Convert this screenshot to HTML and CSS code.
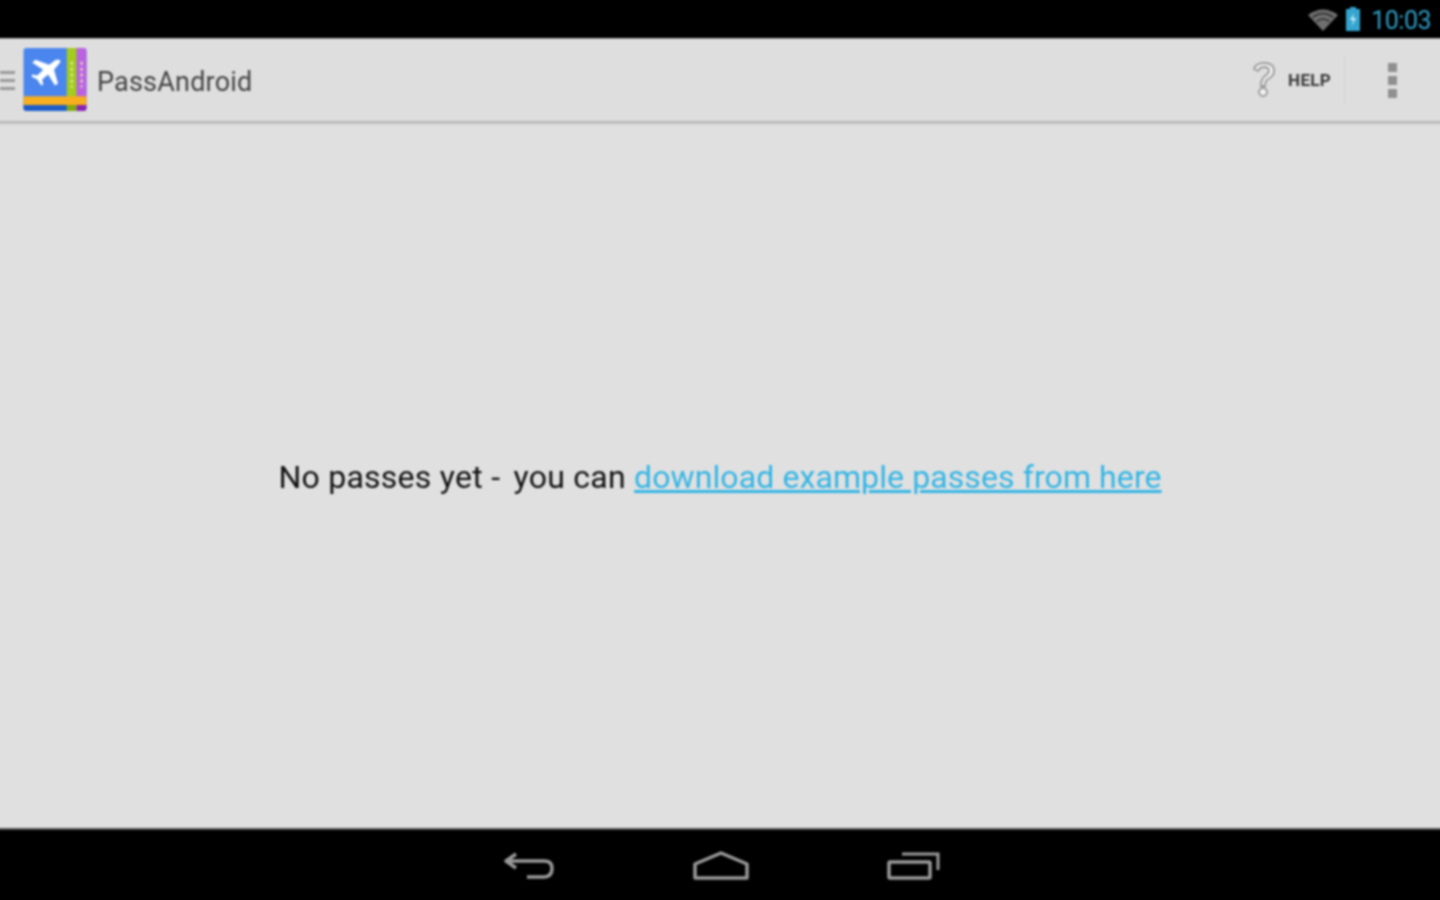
FILE: index.html
```html
<!DOCTYPE html>
<html lang="en">
<head>
  <meta charset="UTF-8">
  <title>PassAndroid</title>
  <link rel="stylesheet" href="styles.css">
</head>
<body>
  <div class="status-bar">
    <svg class="wifi" width="32" height="24" viewBox="0 0 32 24">
      <path d="M1 8 Q16 -3 31 8 L16 24 Z" fill="#6f6f6f"/>
      <path d="M5.500 10.500 Q16 2.500 26.500 10.500 M9.500 14.500 Q16 9.500 22.500 14.500" fill="none" stroke="#2b2b2b" stroke-width="1.500"/>
    </svg>
    <svg class="battery" width="16" height="24" viewBox="0 0 16 24">
      <path d="M5 0 H11 V2 H15 V24 H1 V2 H5 Z" fill="#35a5cf"/>
      <path d="M9 6 L5 13 H8 L7 19 L11 11 H8 Z" fill="#c8ecf8"/>
    </svg>
    <span class="clock">10:03</span>
  </div>

  <header class="action-bar">
    <div class="up-icon"><span></span><span></span><span></span></div>
    <svg class="logo" width="64" height="63" viewBox="0 0 64 64">
      <rect width="64" height="64" rx="3" fill="#4a86ee"/>
      <rect x="44" width="10" height="64" fill="#a4cc1c"/>
      <path d="M54 0 H61 Q64 0 64 3 V50 H54 Z" fill="#bb62e0"/>
      <rect y="49" width="64" height="9" fill="#f7ae1f"/>
      <path d="M0 58 H44 V64 H3 Q0 64 0 61 Z" fill="#1c5cc8"/>
      <rect x="44" y="58" width="10" height="6" fill="#82aa0c"/>
      <path d="M54 58 H64 V61 Q64 64 61 64 H54 Z" fill="#8a22b4"/>
      <path d="M36 12 Q38 12 37 15 L31 22 L35 36 L32 38 L25 27 L19 32 L20 37 L18 38 L14 32 L8 29 L9 27 L14 28 L20 22 L9 15 L12 12 L26 17 L33 12 Z" fill="#fff"/>
      <path d="M49 14 V40 M59 14 V40" stroke="#e6eeb8" stroke-width="2" stroke-dasharray="3 3"/>
    </svg>
    <h1 class="title">PassAndroid</h1>
    <div class="actions">
      <div class="help">
        <svg width="26" height="38" viewBox="0 0 26 38">
          <path d="M3 8 Q5 2 13 2 Q23 2 23 10 Q23 15 17 18 Q14 20 14 25 H10 Q10 18 14 15 Q18 12 18 10 Q18 6 13 6 Q9 6 7 10 Z" fill="#f2f2f2" stroke="#9a9a9a" stroke-width="1.800" stroke-linejoin="round"/>
          <circle cx="12" cy="31" r="4" fill="#f2f2f2" stroke="#9a9a9a" stroke-width="1.800"/>
        </svg>
        <span class="help-label">HELP</span>
      </div>
      <div class="overflow"><span></span><span></span><span></span></div>
    </div>
  </header>

  <main class="content">
    <p class="empty">No passes yet <span class="dash">-</span> you can <a href="#">download example passes from here</a></p>
  </main>

  <nav class="nav-bar">
    <svg width="52" height="30" viewBox="0 0 52 30">
      <path d="M13 3 L3 10 L13 17 M3 10 H41 Q49 10 49 17 Q49 26 41 26 H24" fill="none" stroke="#999" stroke-width="3.500" stroke-linejoin="round"/>
    </svg>
    <svg width="56" height="30" viewBox="0 0 56 30">
      <path d="M2 13 L28 2 L54 13 V27 H2 Z" fill="none" stroke="#999" stroke-width="3.500" stroke-linejoin="round"/>
    </svg>
    <svg width="54" height="30" viewBox="0 0 54 30">
      <rect x="2" y="11" width="41" height="16" rx="1" fill="none" stroke="#999" stroke-width="3.500"/>
      <path d="M15 3 H51 V19" fill="none" stroke="#999" stroke-width="3"/>
    </svg>
  </nav>
</body>
</html>
```

FILE: styles.css
```css
html {
  height: 100%;
  overflow: hidden;
  background-color: #e0e0e0;
}
/* body runs 4px past the window so the blur doesn't fade at the edges */
body {
  margin: -4px;
  display: flex;
  flex-direction: column;
  height: 908px;
  font-family: Roboto, "Liberation Sans", sans-serif;
  background-color: #e0e0e0;
  filter: blur(0.9px);
}
.status-bar {
  height: 42px;
  flex: none;
  box-sizing: border-box;
  background-color: #000;
  display: flex;
  align-items: center;
  justify-content: flex-end;
  padding: 4px 13px 0 0;
}
.wifi {
  margin-right: 6px;
}
.battery {
  margin-right: 10px;
}
.clock {
  color: #2f9cc4;
  font-size: 25px;
  letter-spacing: -0.5px;
  padding-top: 3px;
}
.action-bar {
  height: 85px;
  flex: none;
  display: flex;
  align-items: center;
  padding: 0 4px;
  background-color: #dedede;
  border-top: 1px solid #aaa;
  border-bottom: 2px solid #b5b5b5;
  box-shadow: 0 1px 2px rgba(0, 0, 0, 0.12);
  box-sizing: border-box;
}
.up-icon {
  width: 15px;
  display: flex;
  flex-direction: column;
  gap: 5px;
  margin-right: 8px;
}
.up-icon span {
  height: 3px;
  background-color: #999;
}
.logo {
  margin-right: 10px;
  margin-bottom: 2px;
}
.title {
  margin: 0;
  padding-top: 4px;
  font-size: 27px;
  font-weight: 400;
  letter-spacing: 0.2px;
  color: #444;
}
.actions {
  margin-left: auto;
  display: flex;
  align-items: center;
}
.help {
  display: flex;
  align-items: center;
  gap: 11px;
  height: 48px;
  padding-right: 13px;
  border-right: 1px solid #d2d2d2;
}
.help-label {
  font-size: 17px;
  font-weight: 700;
  letter-spacing: 0.3px;
  color: #3a3a3a;
}
.overflow {
  width: 95px;
  display: flex;
  flex-direction: column;
  align-items: center;
  gap: 4px;
}
.overflow span {
  width: 9px;
  height: 9px;
  background-color: #8f8f8f;
}
.content {
  flex: 1;
  display: flex;
  align-items: center;
  justify-content: center;
}
.empty {
  margin: 2px 0 0;
  font-size: 32px;
  letter-spacing: 0.26px;
  color: #111;
}
.dash {
  padding-right: 5px;
}
.empty a {
  color: #33b5e5;
  letter-spacing: 0.1px;
}
.nav-bar {
  height: 76px;
  flex: none;
  box-sizing: border-box;
  background-color: #000;
  border-top: 2px solid #555;
  padding: 2px 0 4px 4px;
  display: flex;
  align-items: center;
  justify-content: center;
  gap: 138px;
}
```
